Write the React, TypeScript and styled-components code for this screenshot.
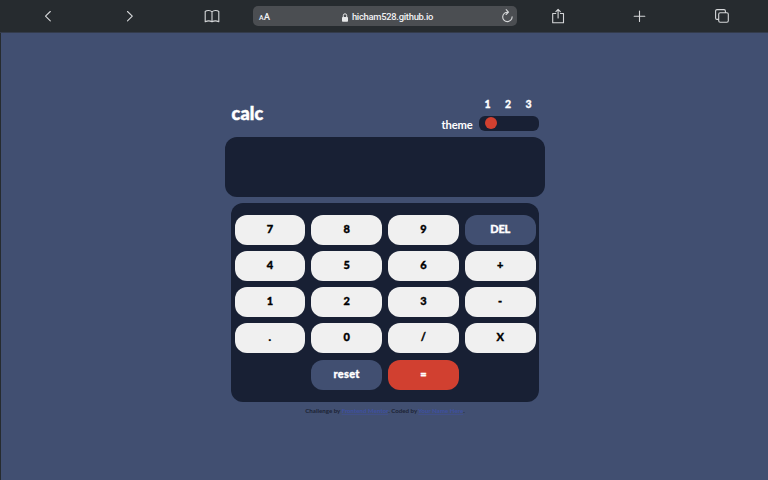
import React from "react";
import styled, { createGlobalStyle } from "styled-components";

const GlobalStyle = createGlobalStyle`
  *, *::before, *::after { box-sizing: border-box; }
  html, body { margin: 0; padding: 0; background: #414f71; overflow: hidden; }
  button { font: inherit; }
`;

const Screen = styled.div`
  width: 768px;
  height: 480px;
  display: flex;
  flex-direction: column;
  background: #262b2f;
  font-family: Lato, "Open Sans", sans-serif;
`;

const BrowserBar = styled.header`
  height: 33px;
  flex: none;
  display: grid;
  grid-template-columns: 89px 82px 82px 264px 82px 82px 82px;
  align-items: center;
  justify-items: center;
  background: #262b2f;
  border-bottom: 1px solid #333b4b;
`;

const NavIcon = styled.svg<{ $shift?: number }>`
  display: block;
  width: 16px;
  height: 16px;
  fill: none;
  stroke: #d5d7d9;
  stroke-width: 1.1;
  stroke-linecap: round;
  stroke-linejoin: round;
  margin-left: ${(p) => p.$shift ?? 0}px;
`;

const AddressBar = styled.div`
  width: 264px;
  height: 20px;
  padding: 0 3px 0 6px;
  border-radius: 5px;
  background: #4b4e52;
  color: #f1f1f2;
  display: grid;
  grid-template-columns: 20px 1fr 14px;
  align-items: center;
`;

const TextSize = styled.span`
  font: 500 9.5px/20px Roboto, sans-serif;
  padding-top: 1px;
  small { font-size: 7px; }
`;

const Address = styled.span`
  display: flex;
  align-items: center;
  justify-content: center;
  gap: 4px;
  padding: 0 4px 0 0;
  font: 500 9.4px/20px Roboto, sans-serif;
  letter-spacing: -0.27px;
  white-space: nowrap;
`;

const LockIcon = styled.svg`
  width: 6px;
  height: 9px;
  flex: none;
`;

const Page = styled.main`
  flex: 1;
  margin-left: 1px;
  padding: 64px 0 0 224px;
  background: #414f71;
`;

const Calculator = styled.section`
  width: 320px;
  display: flex;
  flex-direction: column;
  align-items: center;
`;

const Heading = styled.div`
  width: 307px;
  height: 40px;
  display: flex;
  justify-content: space-between;
`;

const Title = styled.h1`
  margin: 5px 0 0;
  color: #fff;
  font: 900 18px/22px Lato, sans-serif;
  letter-spacing: 0.2px;
  -webkit-text-stroke: 0.5px #fff;
`;

const ThemePicker = styled.div`
  display: grid;
  grid-template-columns: 37px 60px;
  grid-template-rows: 19px 15px;
  color: #fff;
`;

const ThemeNumbers = styled.div`
  grid-column: 2;
  display: flex;
  justify-content: space-between;
  padding: 0 7px 0 6px;
  font: 900 10.5px/15px Lato, sans-serif;
  -webkit-text-stroke: 0.3px #fff;
`;

const ThemeLabel = styled.span`
  font: 700 11.2px/17px Lato, sans-serif;
  letter-spacing: -0.15px;
`;

const Switch = styled.div`
  height: 15px;
  padding: 1px 6px;
  border-radius: 6px;
  background: #182034;
`;

const Knob = styled.div`
  width: 12px;
  height: 12px;
  border-radius: 50%;
  background: #d14030;
`;

const Display = styled.div`
  width: 320px;
  height: 60px;
  border-radius: 12px;
  background: #182034;
`;

const Keypad = styled.div`
  width: 308px;
  height: 199px;
  margin-top: 6px;
  padding: 12px 3px 12px 3.5px;
  border-radius: 12px;
  background: #182034;
  display: grid;
  grid-template-columns: repeat(4, 70.75px);
  grid-auto-rows: 30px;
  column-gap: 6px;
  row-gap: 6.15px;
`;

type Tone = "light" | "blue" | "red";
const tones: Record<Tone, string> = { light: "#f0f0f0", blue: "#414f71", red: "#d14030" };

const Key = styled.button<{ $tone: Tone; $column?: number; $spacing?: number }>`
  border: 0;
  padding: 0 0 2px;
  border-radius: 12px;
  grid-column: ${(p) => p.$column ?? "auto"};
  background: ${(p) => tones[p.$tone]};
  color: ${(p) => (p.$tone === "light" ? "#000" : "#fff")};
  font: 900 11px/14px Lato, sans-serif;
  letter-spacing: ${(p) => p.$spacing ?? 0}px;
  -webkit-text-stroke: 0.35px currentColor;
`;

const Attribution = styled.footer`
  margin-top: 4px;
  color: #1c2334;
  font: 700 6.15px/9px Lato, sans-serif;
  white-space: nowrap;
  a {
    color: #3e50a0;
    text-decoration: underline;
    text-decoration-color: #404f88;
    text-decoration-thickness: 0.5px;
  }
`;

const keys: { label: string; tone?: Tone; column?: number; spacing?: number }[] = [
  { label: "7" }, { label: "8" }, { label: "9" }, { label: "DEL", tone: "blue", spacing: -0.3 },
  { label: "4" }, { label: "5" }, { label: "6" }, { label: "+" },
  { label: "1" }, { label: "2" }, { label: "3" }, { label: "-" },
  { label: "." }, { label: "0" }, { label: "/" }, { label: "X" },
  { label: "reset", tone: "blue", column: 2, spacing: 0.3 }, { label: "=", tone: "red", column: 3 },
];

export default function App() {
  return (
    <Screen>
      <GlobalStyle />
      <BrowserBar>
        <NavIcon viewBox="0 0 16 16" $shift={7}><path d="M10.3 3.5 5.5 8.2l4.8 4.7" /></NavIcon>
        <NavIcon viewBox="0 0 16 16"><path d="M5.5 3.5 10.3 8.2 5.5 12.9" /></NavIcon>
        <NavIcon viewBox="0 0 16 16">
          <path d="M8 3.8C6.4 2.3 3 2.1 1.2 3.5v10.3c2-1 5-1 6.8 0 1.8-1 4.8-1 6.8 0V3.5C13 2.1 9.6 2.3 8 3.8v10" />
        </NavIcon>
        <AddressBar>
          <TextSize><small>A</small>A</TextSize>
          <Address>
            <LockIcon viewBox="0 0 6 9">
              <rect x="0" y="4" width="6" height="4.7" rx=".8" fill="#e7e8e9" />
              <path d="M1.3 4.2V2.5a1.7 1.7 0 0 1 3.4 0v1.7" fill="none" stroke="#e7e8e9" />
            </LockIcon>
            hicham528.github.io
          </Address>
          <NavIcon viewBox="0 0 16 16" $shift={-1}>
            <path d="M8.8 3.2a4.7 4.7 0 1 0 4.3 4.6M7.2.7l2.3 2.5-2.4 2.3" />
          </NavIcon>
        </AddressBar>
        <NavIcon viewBox="0 0 16 16">
          <path d="M5.8 5.5H2.7v9.2h10.8V5.5h-3.1M8.1 10V1.5M5.9 3.6l2.2-2.2 2.2 2.2" />
        </NavIcon>
        <NavIcon viewBox="0 0 16 16"><path d="M7.5 3v10.5M2.2 8.3h10.6" /></NavIcon>
        <NavIcon viewBox="0 0 16 16">
          <rect x="4.7" y="4.7" width="9.6" height="9.6" rx="1.5" />
          <path d="M4.5 11.4H3A1.4 1.4 0 0 1 1.6 10V3A1.4 1.4 0 0 1 3 1.6h7A1.4 1.4 0 0 1 11.4 3v1.5" />
        </NavIcon>
      </BrowserBar>
      <Page>
        <Calculator>
          <Heading>
            <Title>calc</Title>
            <ThemePicker>
              <ThemeNumbers><span>1</span><span>2</span><span>3</span></ThemeNumbers>
              <ThemeLabel>theme</ThemeLabel>
              <Switch><Knob /></Switch>
            </ThemePicker>
          </Heading>
          <Display />
          <Keypad>
            {keys.map(({ label, tone = "light", column, spacing }) => (
              <Key key={label} $tone={tone} $column={column} $spacing={spacing}>{label}</Key>
            ))}
          </Keypad>
          <Attribution>
            Challenge by <a>Frontend Mentor</a>. Coded by <a>Your Name Here</a>.
          </Attribution>
        </Calculator>
      </Page>
    </Screen>
  );
}
